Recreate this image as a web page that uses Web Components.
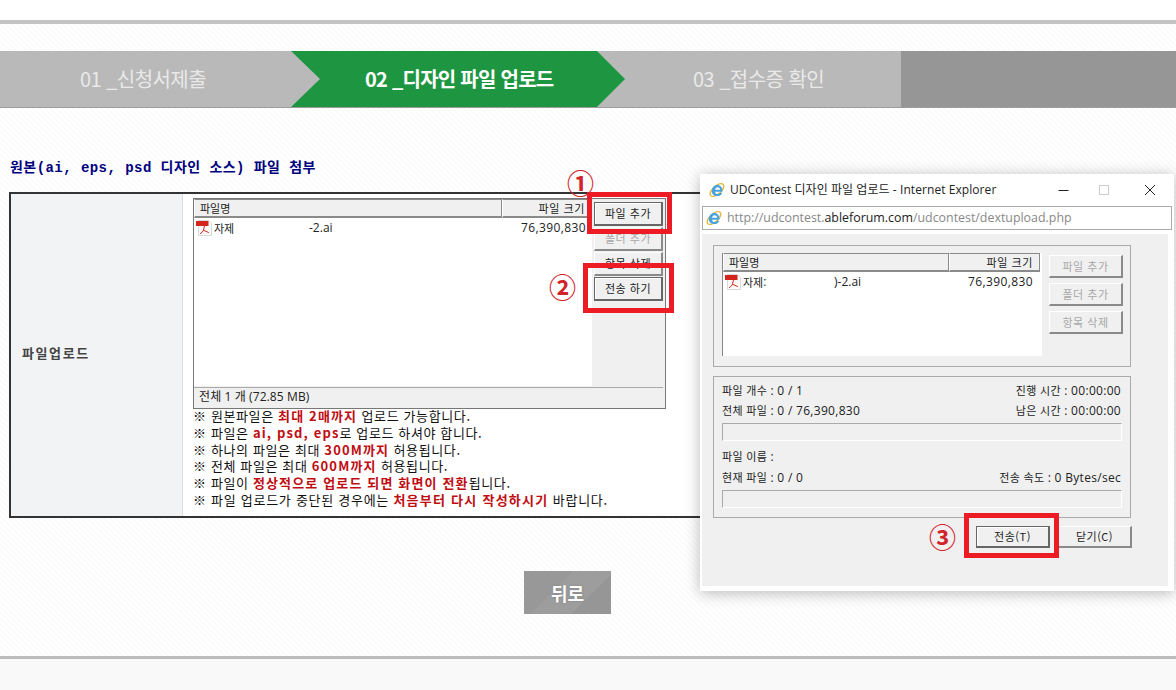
<!DOCTYPE html>
<html lang="ko">
<head>
<meta charset="utf-8">
<title>디자인 파일 업로드</title>
<style>
html,body{margin:0;padding:0;height:690px;overflow:hidden;background:#fff}
</style>
</head>
<body>
<ud-page></ud-page>
<script>
const KR = `"Noto Sans CJK KR","Noto Sans",sans-serif`;
const UI = `"Open Sans","Noto Sans CJK KR",sans-serif`;
const IE = `<svg viewBox="0 0 16 16" width="16" height="16" aria-hidden="true">
<ellipse cx="8" cy="8" rx="8.400" ry="4" transform="rotate(-42 8 8)" fill="none" stroke="#e3b93f" stroke-width="1.400"/>
<path d="M2.800 9.200C2.800 5.400 5.200 2.900 8.300 2.900c3.100 0 5.100 2.300 5.100 5.700v1.100H6.100c.2 1.500 1.100 2.300 2.500 2.300 1.100 0 1.900-.4 2.300-1.300h2.300c-.6 2.100-2.400 3.400-4.700 3.400-3.400 0-5.700-2-5.700-4.900zM6.100 7.800h5c-.1-1.500-1.100-2.500-2.500-2.500S6.300 6.300 6.100 7.800z" fill="#4aa3df" fill-rule="evenodd"/>
</svg>`;
const PDF = `<svg viewBox="0 0 16 16" width="16" height="16" aria-hidden="true">
<path d="M2.500 .5h10l3 3v12h-13z" fill="#fbfbfb" stroke="#cfcfcf" stroke-width=".8"/>
<rect x="0" y="1" width="12.500" height="5" fill="#d3251b"/>
<path d="M8.500 6L7.300 10.800 4.200 14M7.400 10.200L12.800 12.600" fill="none" stroke="#d3251b" stroke-width="1"/>
</svg>`;
function def(name, html){
  customElements.define(name, class extends HTMLElement{
    constructor(){ super(); this.attachShadow({mode:'open'}).innerHTML = html; }
  });
}

def('ud-step-bar', `<style>
:host{display:flex;height:56px;margin-top:27px;background:#b9b9b9;border-bottom:1px solid #9c9c9c;font:400 20px/56px ${KR};color:#e9e9e9;letter-spacing:-.55px}
.a{width:291px;box-sizing:border-box;padding-left:80px}
.b{width:334px;box-sizing:border-box;padding-left:74px;background:#1e9641;color:#fff;font-weight:700;letter-spacing:-.75px;
   clip-path:polygon(0 0,306px 0,334px 50%,306px 100%,0 100%,29px 50%)}
.c{width:276px;box-sizing:border-box;padding-left:68px}
.d{flex:1;background:#969696}
</style><div class="a">01 _신청서제출</div><div class="b">02 _디자인 파일 업로드</div><div class="c">03 _접수증 확인</div><div class="d"></div>`);

def('ud-win-button', `<style>
:host{display:flex;align-items:center;justify-content:center;box-sizing:border-box;width:var(--w,69px);height:var(--h,24px);
 background:#f0f0f0;color:#222;font:400 11px/1 ${KR};letter-spacing:.5px;
 border:1px solid #fff;border-right:2px solid #8a8a8a;border-bottom:2px solid #8a8a8a}
:host([disabled]){color:#a8a8a8}
:host([primary]){border:1px solid #666;border-right-width:2px;border-bottom-width:2px;box-shadow:inset 1px 1px 0 #fff}
</style><slot></slot>`);

def('ud-file-list', `<style>
:host{display:flex;flex-direction:column;box-sizing:border-box;background:#fff;width:var(--list-w);height:var(--list-h);color:#222;font:400 12px/16px ${UI}}
.head{display:flex;height:19px;flex:none;font:400 11px/16px ${KR}}
.cell{box-sizing:border-box;height:19px;background:#f0f0f0;border:1px solid #8a8a8a;border-bottom-width:2px;border-left-color:#fff;padding:0 5px}
.name{width:var(--name-w)}
.size{width:var(--size-w);text-align:right;letter-spacing:.6px;padding-right:var(--head-pad,5px)}
.row{display:flex;align-items:center;height:16px;margin-top:2px;padding-left:2px}
svg{flex:none;margin-right:2px}
.a{width:var(--a-w);font-family:${KR};font-size:11px}
.b{flex:none}
.s{margin-left:auto;width:var(--size-w);box-sizing:border-box;text-align:right;padding-right:var(--size-pad,6px);letter-spacing:.4px}
</style>
<div class="head"><div class="cell name">파일명</div><div class="cell size">파일 크기</div></div>
<div class="row">${PDF}<span class="a"><slot name="a"></slot></span><span class="b"><slot name="b"></slot></span><span class="s"><slot name="size"></slot></span></div>`);

def('ud-upload-widget', `<style>
:host{display:flex;flex-direction:column;box-sizing:border-box;width:473px;height:211px;border:1px solid #777;background:#f0f0f0;color:#222}
.top{display:flex;height:188px;flex:none;border-bottom:1px solid #aaa;margin-right:2px}
.side{display:flex;flex-direction:column;gap:1px;padding:3px 0 0 2px}
.status{font:400 12px/17px ${UI};padding-left:5px;letter-spacing:.1px}
ud-file-list{--list-w:398px;--list-h:187px;--name-w:308px;--size-w:86px;--a-w:95px;--size-pad:6px;--head-pad:2px}
</style>
<div class="top">
<ud-file-list><span slot="a">자제</span><span slot="b">-2.ai</span><span slot="size">76,390,830</span></ud-file-list>
<div class="side">
<ud-win-button primary>파일 추가</ud-win-button>
<ud-win-button disabled>폴더 추가</ud-win-button>
<ud-win-button>항목 삭제</ud-win-button>
<ud-win-button primary>전송 하기</ud-win-button>
</div>
</div>
<div class="status">전체 1 개 (72.85 MB)</div>`);

def('ud-notes', `<style>
:host{display:block;margin-top:-1px;font:400 13px/16.8px ${KR};color:#111}
div{white-space:nowrap;letter-spacing:.62px}
b{color:#c00d12;font-weight:700;letter-spacing:1.15px}
.long{letter-spacing:.72px}
.long b{letter-spacing:1.25px}
</style>
<div>※ 원본파일은 <b>최대 2매까지</b> 업로드 가능합니다.</div>
<div>※ 파일은 <b>ai, psd, eps</b>로 업로드 하셔야 합니다.</div>
<div>※ 하나의 파일은 최대 <b>300M까지</b> 허용됩니다.</div>
<div>※ 전체 파일은 최대 <b>600M까지</b> 허용됩니다.</div>
<div>※ 파일이 <b>정상적으로 업로드 되면 화면이 전환</b>됩니다.</div>
<div class="long">※ 파일 업로드가 중단된 경우에는 <b>처음부터 다시 작성하시기</b> 바랍니다.</div>`);

def('ud-upload-table', `<style>
:host{display:flex;box-sizing:border-box;width:1090px;height:326px;margin-left:9px;border:2px solid #333;background:#fff}
.label{display:flex;align-items:center;box-sizing:border-box;width:172px;flex:none;padding:0 0 6px 11px;background:#f2f3f5;border-right:1px solid #ddd;font:700 13px/1 ${KR};color:#444;letter-spacing:1.6px}
.cell{padding:4px 0 0 10px}
</style>
<div class="label">파일업로드</div>
<div class="cell"><ud-upload-widget></ud-upload-widget><ud-notes></ud-notes></div>`);

def('ud-popup', `<style>
:host{position:absolute;left:700px;top:174px;width:474px;height:417px;box-sizing:border-box;background:#fff;box-shadow:0 2px 14px rgba(0,0,0,.28);display:flex;flex-direction:column;color:#222}
.title{display:flex;align-items:center;height:32px;flex:none;padding-left:9px;font:400 12px/1 ${UI};letter-spacing:.07px}
.title svg{margin-right:5px}
.title span{flex:1}
.ctl{display:flex;align-items:center;flex:none}
.url{display:flex;align-items:center;box-sizing:border-box;height:24px;margin:0 2px;border:1px solid #aaa;padding-left:3px;font:400 12.400px/1 ${UI};color:#888;flex:none}
.url svg{margin-right:5px}
.url em{font-style:normal;color:#222}
.body{flex:none;box-sizing:border-box;margin:4px 6px 0 2px;height:352px;background:#f0f0f0;padding:11px 0 0 11px}
.group{box-sizing:border-box;width:418px;border:1px solid #aaa}
.g1{height:122px;display:flex;padding:7px 0 0 8px}
.g1 ud-file-list{--list-w:320px;--list-h:103px;--name-w:226px;--size-w:91px;--a-w:91px;--size-pad:9px;--head-pad:6px;border-left:1px solid #888}
.col{display:flex;flex-direction:column;gap:5px;margin:2px 0 0 7px;--w:74px;--h:23px}
.g2{height:142px;margin-top:9px;padding:3px 9px 0 8px;font:400 12px/20px ${UI}}
.line{display:flex;justify-content:space-between;height:20px;white-space:nowrap}
.line span{letter-spacing:.3px}
.bar{box-sizing:border-box;height:18px;margin:3px -1px 0 0;border:1px solid #fff;border-top-color:#aaa;border-left-color:#aaa}
.gap{margin-top:5px}
.gap + .line{margin-top:1px}
.kr{font-family:${KR};font-size:11px;letter-spacing:.5px}
.foot{display:flex;justify-content:flex-end;gap:8px;width:419px;margin-top:8px;--w:74px;--h:22px}
</style>
<div class="title">${IE}<span>UDContest 디자인 파일 업로드 - Internet Explorer</span>
<svg class="ctl" width="117" height="12" viewBox="0 0 117 12" style="margin-right:9px" aria-hidden="true">
<path d="M10.500 6.500H20.500" stroke="#222"/><rect x="51.500" y="1.500" width="9" height="9" fill="none" stroke="#ccc"/><path d="M97 1L107 11M107 1L97 11" stroke="#222"/>
</svg></div>
<div class="url">${IE}<span>http://udcontest.<em>ableforum.com</em>/udcontest/dextupload.php</span></div>
<div class="body">
<div class="group g1">
<ud-file-list><span slot="a">자제:</span><span slot="b">)-2.ai</span><span slot="size">76,390,830</span></ud-file-list>
<div class="col"><ud-win-button disabled>파일 추가</ud-win-button><ud-win-button disabled>폴더 추가</ud-win-button><ud-win-button disabled>항목 삭제</ud-win-button></div>
</div>
<div class="group g2">
<div class="line"><span><span class="kr">파일 개수</span> : 0 / 1</span><span><span class="kr">진행 시간</span> : 00:00:00</span></div>
<div class="line"><span><span class="kr">전체 파일</span> : 0 / 76,390,830</span><span><span class="kr">남은 시간</span> : 00:00:00</span></div>
<div class="bar"></div>
<div class="line gap"><span><span class="kr">파일 이름</span> :</span></div>
<div class="line"><span><span class="kr">현재 파일</span> : 0 / 0</span><span><span class="kr">전송 속도</span> : 0 Bytes/sec</span></div>
<div class="bar"></div>
</div>
<div class="foot"><ud-win-button primary>전송(T)</ud-win-button><ud-win-button>닫기(C)</ud-win-button></div>
</div>`);

def('ud-callout', `<style>
:host{position:absolute;box-sizing:border-box;border:5px solid #ed1c24;left:var(--x);top:var(--y);width:var(--w);height:var(--h)}
</style>`);

def('ud-mark', `<style>
:host{position:absolute;left:var(--x);top:var(--y);width:25px;height:25px;display:flex;align-items:center;justify-content:center;
 font:700 27px/25px ${KR};color:#d2232a}
</style><slot></slot>`);

def('ud-page', `<style>
:host{display:flex;flex-direction:column;position:relative;width:1176px;height:690px;overflow:hidden;font-family:${KR}}
.top{height:20px;flex:none;background:#fff;border-bottom:4px solid #c4c4c4}
.main{flex:none;height:632px;overflow:hidden;display:flex;flex-direction:column;
 background:repeating-linear-gradient(45deg,#fff 0 2px,#fbfbfb 2px 4px)}
h1{margin:51px 0 15px 10px;font:700 14px/18px "Liberation Mono",${KR};color:#00007f;letter-spacing:.45px;white-space:nowrap}
.back{display:flex;align-items:center;justify-content:center;box-sizing:border-box;width:87px;height:43px;margin:53px 0 0 524px;flex:none;
 background:linear-gradient(135deg,#989898 0 38%,#9d9d9d 38% 70%,#969696 70%);color:#fff;font:700 18px/1 ${KR};text-shadow:0 0 2px #777}
.foot{flex:1;background:#f9f9f9;border-top:3px solid #bcbcbc}
</style>
<div class="top"></div>
<div class="main">
<ud-step-bar></ud-step-bar>
<h1>원본(ai, eps, psd 디자인 소스) 파일 첨부</h1>
<ud-upload-table></ud-upload-table>
<div class="back">뒤로</div>
</div>
<div class="foot"></div>
<ud-popup></ud-popup>
<ud-callout style="--x:587px;--y:192px;--w:85px;--h:42px"></ud-callout>
<ud-callout style="--x:583px;--y:263px;--w:91px;--h:50px"></ud-callout>
<ud-callout style="--x:964px;--y:513px;--w:95px;--h:45px"></ud-callout>
<ud-mark style="--x:568px;--y:170px">①</ud-mark>
<ud-mark style="--x:550px;--y:274px">②</ud-mark>
<ud-mark style="--x:930px;--y:524px">③</ud-mark>`);
</script>
</body>
</html>
